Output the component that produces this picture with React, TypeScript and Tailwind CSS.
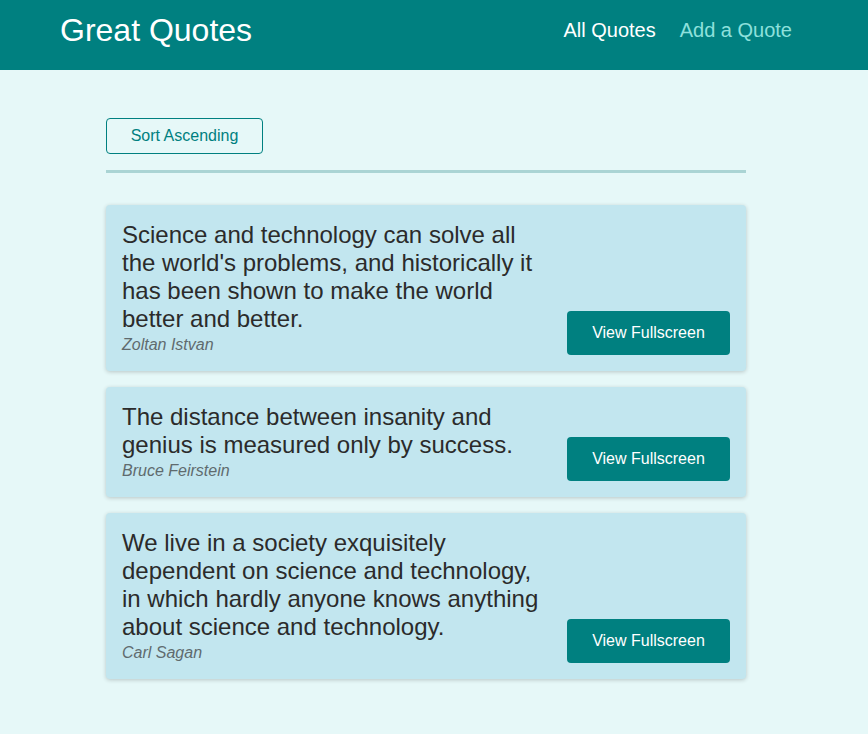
const quotes = [
  {
    id: 'q1',
    text: "Science and technology can solve all the world's problems, and historically it has been shown to make the world better and better.",
    author: 'Zoltan Istvan',
  },
  {
    id: 'q2',
    text: 'The distance between insanity and genius is measured only by success.',
    author: 'Bruce Feirstein',
  },
  {
    id: 'q3',
    text: 'We live in a society exquisitely dependent on science and technology, in which hardly anyone knows anything about science and technology.',
    author: 'Carl Sagan',
  },
];

export default function App() {
  return (
    <div
      className="min-h-[734px] bg-[#e6f8f8]"
      style={{ fontFamily: '"Liberation Sans", Arial, sans-serif' }}
    >
      <header className="h-[70px] bg-[#008080]">
        <div className="w-[852px] h-full flex items-center justify-between px-[60px] pb-[10px]">
          <div className="text-[32px] text-white leading-none">Great Quotes</div>
          <nav>
            <ul className="flex gap-6 text-[20px]">
              <li className="text-white">All Quotes</li>
              <li className="text-[#8ee0dc]">Add a Quote</li>
            </ul>
          </nav>
        </div>
      </header>

      <main className="w-[852px]">
        <div className="w-[640px] mx-auto pt-12">
          <div className="pb-4 border-b-[3px] border-[#aad4d4]">
            <button className="w-[157px] h-9 border border-[#008080] rounded text-[#008080] text-base">
              Sort Ascending
            </button>
          </div>

          <ul className="mt-8 flex flex-col gap-4">
            {quotes.map((q) => (
              <li
                key={q.id}
                className="flex items-end justify-between bg-[#c2e6ef] rounded p-4 shadow-[0_1px_4px_rgba(0,0,0,0.2)]"
              >
                <figure className="w-[425px]">
                  <blockquote className="text-[24px] leading-[28px] text-[#2b2b2b]">
                    {q.text}
                  </blockquote>
                  <figcaption className="italic text-[16px] leading-[20px] mt-[2px] text-[#5f6b6e]">
                    {q.author}
                  </figcaption>
                </figure>
                <button className="w-[163px] h-11 bg-[#008080] text-white rounded text-base">
                  View Fullscreen
                </button>
              </li>
            ))}
          </ul>
        </div>
      </main>
    </div>
  );
}
